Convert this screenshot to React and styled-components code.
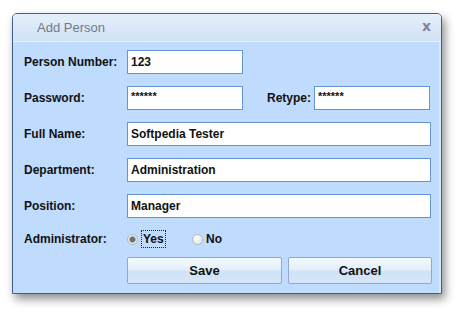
import React from 'react';
import styled, { createGlobalStyle } from 'styled-components';

const Global = createGlobalStyle`
  html, body { margin: 0; padding: 0; background: #fff; }
  body { font-family: "Liberation Sans", Arial, sans-serif; }
`;

function Field({ label, value, width }) {
  return (
    <Row>
      <Label>{label}</Label>
      <Input $width={width}>{value}</Input>
    </Row>
  );
}

export default function App() {
  return (
    <Page>
      <Global />
      <Window>
        <TitleBar>
          <Title>Add Person</Title>
          <Close>x</Close>
        </TitleBar>
        <Body>
          <Field label="Person Number:" value="123" width="116px" />
          <Row>
            <Label>Password:</Label>
            <Input $width="116px" $stars>******</Input>
            <Retype>Retype:</Retype>
            <Input $width="116px" $stars>******</Input>
          </Row>
          <Field label="Full Name:" value="Softpedia Tester" />
          <Field label="Department:" value="Administration" />
          <Field label="Position:" value="Manager" />
          <RadioRow>
            <Label>Administrator:</Label>
            <Radio>
              <Dot $checked />
              <Focus>Yes</Focus>
            </Radio>
            <Radio>
              <Dot />
              <span>No</span>
            </Radio>
          </RadioRow>
          <Buttons>
            <Button $width="155px">Save</Button>
            <Button $width="144px">Cancel</Button>
          </Buttons>
        </Body>
      </Window>
    </Page>
  );
}

const Page = styled.div`
  width: 462px;
  height: 314px;
  padding: 13px 0 0 12px;
  box-sizing: border-box;
`;

const Window = styled.div`
  width: 430px;
  height: 281px;
  box-sizing: border-box;
  border: 1px solid #3f5f8e;
  border-radius: 5px 5px 0 0;
  background: #bfdbfd;
  box-shadow: 3px 5px 10px rgba(0, 0, 0, 0.45);
  display: flex;
  flex-direction: column;
  overflow: hidden;
`;

const TitleBar = styled.div`
  height: 27px;
  flex: none;
  display: flex;
  align-items: center;
  justify-content: space-between;
  padding: 0 10px 0 24px;
  background: linear-gradient(180deg, #e6f0fc 0%, #dbe8f8 50%, #d2e2f6 100%);
  border-bottom: 1px solid #e9f2fd;
`;

const Title = styled.span`
  font-size: 13px;
  color: #6f7a89;
`;

const Close = styled.span`
  font-family: "DejaVu Sans", sans-serif;
  font-size: 14px;
  font-weight: bold;
  color: #7b8798;
  line-height: 1;
  margin-top: -3px;
`;

const Body = styled.div`
  flex: 1;
  padding: 8px 8px 0 11px;
  display: flex;
  flex-direction: column;
  gap: 12px;
  border-right: 2px solid #d6e7fc;
`;

const Row = styled.div`
  display: flex;
  align-items: center;
  height: 24px;
`;

const Label = styled.span`
  width: 103px;
  flex: none;
  font-size: 12px;
  font-weight: bold;
  color: #111;
`;

const Input = styled.div`
  box-sizing: border-box;
  width: ${p => p.$width || '304px'};
  height: 24px;
  flex: none;
  background: #fff;
  border: 1px solid #6395d3;
  padding: ${p => (p.$stars ? '1px 0 0 3px' : '3px 0 0 3px')};
  font-size: ${p => (p.$stars ? '11px' : '12px')};
  font-weight: bold;
  color: #111;
  line-height: 16px;
`;

const Retype = styled.span`
  margin: 0 6px 0 24px;
  width: 41px;
  font-size: 12px;
  font-weight: bold;
  color: #111;
`;

const RadioRow = styled(Row)`
  height: 18px;
`;

const Radio = styled.label`
  display: flex;
  align-items: center;
  gap: 3px;
  width: 65px;
  font-size: 12px;
  font-weight: bold;
  color: #111;
`;

const Dot = styled.span`
  width: 11px;
  height: 11px;
  border-radius: 50%;
  border: 1px solid #b4b8bd;
  background: ${p =>
    p.$checked
      ? 'radial-gradient(circle, #6d7075 0 2.5px, #e4e6e9 3.5px, #f4f5f6 100%)'
      : 'radial-gradient(circle at 40% 35%, #fdfdfd 0%, #dfe1e4 100%)'};
  box-sizing: border-box;
`;

const Focus = styled.span`
  border: 1px dotted #222;
  padding: 0 1px;
  line-height: 16px;
`;

const Buttons = styled.div`
  display: flex;
  gap: 6px;
  margin: -3px 0 0 103px;
`;

const Button = styled.button`
  width: ${p => p.$width};
  flex: none;
  height: 27px;
  box-sizing: border-box;
  border: 1px solid #8ea9cc;
  border-radius: 2px;
  background: linear-gradient(180deg, #f3f8fe 0%, #e4effb 45%, #d0e2f7 55%, #d6e6f8 100%);
  font-family: "Liberation Sans", Arial, sans-serif;
  font-size: 13px;
  font-weight: bold;
  color: #111;
  padding: 0;
`;
